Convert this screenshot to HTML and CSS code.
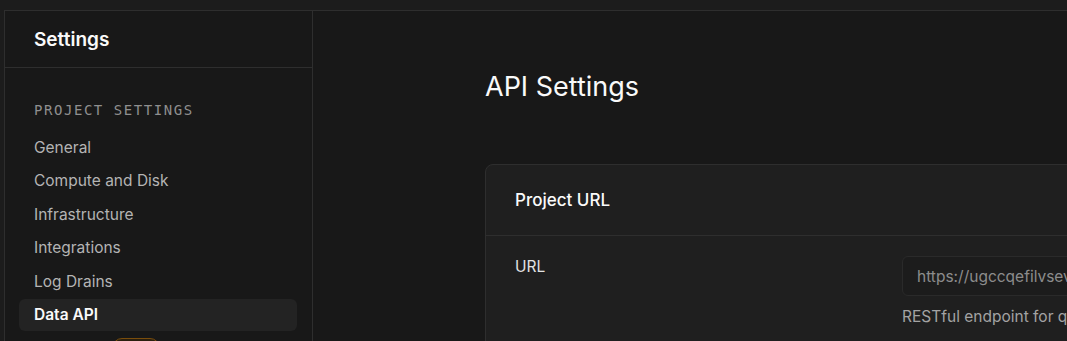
FILE: index.html
```html
<!DOCTYPE html>
<html>
<head>
    <meta charset="utf-8"/>
    <title>API Settings</title>
    <link rel="stylesheet" href="styles.css">
</head>
<body>
<div class="app">
    <div class="frame">
        <aside class="sidebar">
            <div class="sidebar-head">Settings</div>
            <div class="sidebar-body">
                <div class="group-title">PROJECT SETTINGS</div>
                <ul class="nav">
                    <li class="nav-item">General</li>
                    <li class="nav-item">Compute and Disk</li>
                    <li class="nav-item">Infrastructure</li>
                    <li class="nav-item">Integrations</li>
                    <li class="nav-item">Log Drains</li>
                    <li class="nav-item active">Data API</li>
                    <li class="nav-item">Vault <span class="badge">Alpha</span></li>
                </ul>
            </div>
        </aside>
        <main class="main">
            <div class="content">
                <h1 class="page-title">API Settings</h1>
                <section class="card">
                    <div class="card-head">Project URL</div>
                    <div class="card-row">
                        <div class="row-label">URL</div>
                        <div class="row-field">
                            <div class="input">https://ugccqefilvsevmbzwxq.supabase.co</div>
                            <div class="help">RESTful endpoint for querying and managing your database</div>
                        </div>
                    </div>
                </section>
            </div>
        </main>
    </div>
</div>
</body>
</html>
```

FILE: styles.css
```css
html,
body {
    height: 100%;
    margin: 0;
    padding: 0;
}

body {
    background: #1c1c1c;
    font-family: Inter, "Noto Sans", sans-serif;
    color: #ededed;
    overflow: hidden;
}

.app {
    height: 100%;
    padding: 10px 0 0 4px;
    box-sizing: border-box;
}

.frame {
    display: flex;
    height: 100%;
    background: #181818;
    border-top: 1px solid #2e2e2e;
    border-left: 1px solid #2e2e2e;
}

/* sidebar */
.sidebar {
    width: 307px;
    flex-shrink: 0;
    border-right: 1px solid #2e2e2e;
}

.sidebar-head {
    height: 56px;
    display: flex;
    align-items: center;
    padding-left: 29px;
    border-bottom: 1px solid #2e2e2e;
    font-size: 19px;
    font-weight: 600;
    color: #fafafa;
}

.sidebar-body {
    padding: 32px 15px 0 14px;
}

.group-title {
    padding-left: 15px;
    font-family: "DejaVu Sans Mono", "Liberation Mono", monospace;
    font-size: 14px;
    letter-spacing: 1.55px;
    line-height: 20px;
    color: #8f8f8f;
    margin-bottom: 11px;
}

.nav {
    list-style: none;
    margin: 0;
    padding: 0;
    display: flex;
    flex-direction: column;
    gap: 1.6px;
}

.nav-item {
    height: 32px;
    display: flex;
    align-items: center;
    padding-left: 15px;
    border-radius: 6px;
    font-size: 15.5px;
    color: #b4b4b4;
}

.nav-item.active {
    background: #232323;
    color: #fafafa;
    font-weight: 600;
}

.badge {
    margin-left: 41px;
    padding: 2px 8px;
    border: 1px solid #7a4d0c;
    background: #2a1f0e;
    border-radius: 10px;
    font-size: 11px;
    line-height: 16px;
    color: #f1a10d;
}

/* main */
.main {
    flex: 1;
    min-width: 0;
}

.content {
    padding-left: 172px;
    width: 1100px;
}

.page-title {
    margin: 56px 0 57px;
    font-size: 27px;
    font-weight: 400;
    line-height: 40px;
    color: #fafafa;
}

.card {
    background: #1f1f1f;
    border: 1px solid #2e2e2e;
    border-radius: 8px;
}

.card-head {
    height: 70px;
    display: flex;
    align-items: center;
    padding-left: 29px;
    border-bottom: 1px solid #2e2e2e;
    font-size: 17px;
    font-weight: 500;
    color: #fafafa;
}

.card-row {
    display: grid;
    grid-template-columns: 387px 1fr;
    padding: 20px 29px 40px;
}

.row-label {
    padding-top: 1px;
    font-size: 15.5px;
    line-height: 20px;
    color: #e2e2e2;
}

.input {
    height: 38px;
    display: flex;
    align-items: center;
    padding-left: 14px;
    background: #1c1c1c;
    border: 1px solid #2a2a2a;
    border-radius: 6px;
    font-size: 15.5px;
    color: #8c8c8c;
    white-space: nowrap;
}

.help {
    margin-top: 11px;
    font-size: 15.5px;
    color: #a3a3a3;
}
```
